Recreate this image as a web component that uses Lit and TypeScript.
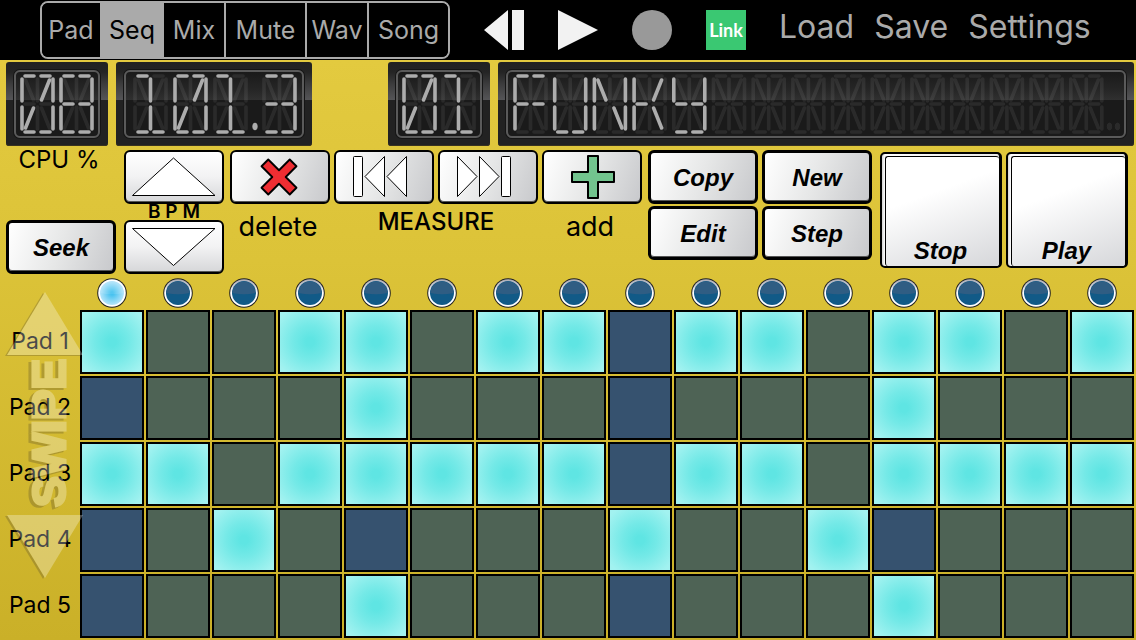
import { LitElement, html, svg, css } from "lit";
import { customElement, property, state } from "lit/decorators.js";
import { classMap } from "lit/directives/class-map.js";

/* Sixteen-segment geometry inside a 35 x 60 cell: x1, y1, x2, y2. */
const SEGMENTS: Record<string, number[]> = {
  a: [5, 2, 14, 2],
  b: [21, 2, 30, 2],
  c: [33, 5, 33, 27],
  d: [33, 33, 33, 55],
  e: [21, 58, 30, 58],
  f: [5, 58, 14, 58],
  g: [2, 33, 2, 55],
  h: [2, 5, 2, 27],
  i: [5, 30, 14, 30],
  j: [21, 30, 30, 30],
  k: [5.5, 6, 13.5, 26],
  l: [17.5, 5, 17.5, 27],
  m: [29.5, 6, 21.5, 26],
  n: [13.5, 34, 5.5, 54],
  o: [17.5, 33, 17.5, 55],
  p: [21.5, 34, 29.5, 54],
};

const LIT: Record<string, string> = {
  " ": "",
  "0": "abcdefghmn",
  "1": "aloef",
  "3": "bacdefij",
  "8": "abcdefghij",
  F: "abghij",
  U: "cdefgh",
  N: "cdghkp",
  K: "ghimp",
  Y: "hijcdef",
};

@customElement("segment-display")
class SegmentDisplay extends LitElement {
  @property() value = "";
  @property({ type: Number }) span = 102;
  @property({ type: Number }) start = 14;
  @property({ type: Number }) pitch = 39;
  @property({ type: Number }) trailing = 0;

  static styles = css`
    :host {
      display: block;
      box-sizing: border-box;
      min-width: 0;
      height: 84px;
      padding: 8px;
      border-radius: 3px;
      background: linear-gradient(#222 0, #242424 10px, #3c3c3d 22px, #555557 38px, #222 38px, #222 100%);
      box-shadow: inset 0 -1px 0 #3a3320;
    }
    .glass {
      box-sizing: border-box;
      height: 68px;
      border: 2px solid #5a5a5a;
      border-radius: 6px;
      box-shadow: 0 0 0 1px #151515;
      background: linear-gradient(#1a1a1a 0, #262626 18px, #303030 28px, #1a1a1a 28px, #1a1a1a 100%);
    }
    svg {
      display: block;
      width: 100%;
      height: 64px;
    }
    line {
      stroke-width: 3.6;
      stroke-linecap: round;
    }
    .off {
      stroke: #fff;
      fill: #fff;
      opacity: 0.07;
    }
    .on {
      stroke: #adadad;
      fill: #adadad;
    }
    ellipse {
      stroke: none;
    }
  `;

  private dot(x: number, on: boolean) {
    return svg`<ellipse class=${on ? "on" : "off"} cx=${x} cy="54.5" rx="2.2" ry="3.4"></ellipse>`;
  }

  render() {
    let x = this.start;
    const parts = [];
    for (const ch of this.value) {
      if (ch === ".") {
        parts.push(this.dot(x + 2, true));
        x += 9;
        continue;
      }
      const lit = LIT[ch] ?? "";
      const keys = Object.keys(SEGMENTS).sort((p, q) => Number(lit.includes(p)) - Number(lit.includes(q)));
      parts.push(svg`<g transform="translate(${x} 2)">${keys.map((k) => {
        const [x1, y1, x2, y2] = SEGMENTS[k];
        return svg`<line class=${lit.includes(k) ? "on" : "off"} x1=${x1} y1=${y1} x2=${x2} y2=${y2}></line>`;
      })}</g>`);
      x += this.pitch;
    }
    for (let i = 0; i < this.trailing; i++) parts.push(this.dot(x + 1 + i * 8, false));
    return html`<div class="glass">
      <svg viewBox="10 0 ${this.span - 20} 64" role="img" aria-label=${this.value.trim()}>${parts}</svg>
    </div>`;
  }
}

const TABS = [
  { name: "Pad", size: "narrow" },
  { name: "Seq", size: "mid" },
  { name: "Mix", size: "mid" },
  { name: "Mute", size: "wide" },
  { name: "Wav", size: "mid" },
  { name: "Song", size: "wide" },
];

const PATTERN = [
  "x..xx.xx.xx.xx.x",
  "....x.......x...",
  "xx.xxxxx.xx.xxxx",
  "..x.....x..x....",
  "....x.......x...",
];

const CROSS = "M-5 -21H5V-5H21V5H5V21H-5V5H-21V-5H-5Z";

@customElement("app-root")
class AppRoot extends LitElement {
  @state() tab = "Seq";
  @state() step = 0;
  @state() rows = PATTERN.map((r) => [...r].map((c) => c === "x"));

  static styles = css`
    :host {
      display: block;
      min-height: 100vh;
      box-sizing: border-box;
      overflow: hidden;
      font-family: Inter, "Liberation Sans", sans-serif;
      color: #000;
      background: linear-gradient(#e3ca3f 60px, #dcc338 260px, #cab028 100%);
    }
    button {
      margin: 0;
      padding: 0;
      font: inherit;
      color: inherit;
      cursor: pointer;
    }
    svg {
      display: block;
    }
    .topbar {
      display: flex;
      align-items: center;
      height: 60px;
      padding-left: 40px;
      background: #000;
      color: #aaa;
    }
    .tabs {
      display: flex;
      height: 54px;
      border: 2px solid #aaa;
      border-radius: 8px;
      overflow: hidden;
      font-size: 25px;
    }
    .tab {
      box-sizing: border-box;
      border: 0;
      border-left: 2px solid #aaa;
      background: #000;
    }
    .tab:first-child {
      border-left: 0;
    }
    .narrow {
      width: 58px;
    }
    .mid {
      width: 62px;
    }
    .wide {
      width: 81px;
    }
    .tab.selected {
      background: #aaa;
      color: #000;
    }
    .transport {
      display: flex;
      gap: 34px;
      margin-left: 34px;
    }
    .plain {
      width: 40px;
      height: 40px;
      border: 0;
      background: none;
    }
    .plain.link {
      background: #3ac872;
      color: #fff;
      font: bold 18px/40px Lato, sans-serif;
    }
    .menu {
      display: flex;
      gap: 20px;
      margin: 0 0 6px 33px;
    }
    .menu button {
      border: 0;
      background: none;
      font-size: 32px;
      line-height: 40px;
    }
    .displays {
      display: flex;
      gap: 8px;
      padding: 2px 2px 0 6px;
    }
    .d102 {
      flex: 102 1 102px;
    }
    .d196 {
      flex: 196 1 196px;
      margin-right: 68px;
    }
    .d636 {
      flex: 636 1 636px;
    }
    .controls {
      display: flex;
      height: 124px;
      padding: 4px 8px 0 6px;
    }
    .col {
      display: flex;
      flex-direction: column;
      align-items: stretch;
      text-align: center;
      margin-right: 6px;
    }
    .seekcol {
      flex: 110 1 0;
      justify-content: space-between;
      margin-right: 8px;
    }
    .single {
      flex: 100 1 0;
    }
    .single.tight {
      margin-right: 4px;
    }
    .double {
      flex: 204 1 0;
      margin-right: 4px;
    }
    .pair {
      display: grid;
      grid-template-columns: 1fr 1fr;
      gap: 2px 4px;
    }
    .quad {
      flex: 224 1 0;
      margin-right: 8px;
      align-content: start;
    }
    .big {
      flex: 248 1 0;
      padding-top: 2px;
      align-content: start;
    }
    .cap {
      font-size: 24px;
      line-height: 20px;
      white-space: nowrap;
    }
    .seekcol .cap {
      padding-right: 4px;
    }
    .cap.bpm {
      font-size: 19px;
      line-height: 16px;
      font-weight: 600;
      white-space: pre;
    }
    .cap.low {
      padding-right: 4px;
      font-size: 27px;
      line-height: 46px;
    }
    .cap.measure {
      line-height: 36px;
      font-weight: 500;
    }
    .key {
      box-sizing: border-box;
      height: 54px;
      border: 2px solid #000;
      border-radius: 6px;
      background: linear-gradient(110deg, #fff, #e6e7e7 50%, #c8c9cc);
      box-shadow: inset 0 -1px 0 #555;
    }
    .key.vert {
      background: linear-gradient(#fff, #f2f2f3 50%, #d6d7d9);
    }
    .key svg {
      width: 100%;
      height: 50px;
    }
    .key.word {
      border-width: 3px;
      padding-top: 2px;
      font: italic bold 24px "Liberation Sans", sans-serif;
    }
    .slab {
      box-sizing: border-box;
      height: 116px;
      border: 2px solid #000;
      border-right-width: 3px;
      border-radius: 5px;
      padding: 2px 0 0 3px;
      background: linear-gradient(90deg, #d4d4d4, #fff 3px, #e8e8e8);
      font: italic bold 24px/30px "Liberation Sans", sans-serif;
    }
    .face {
      display: flex;
      box-sizing: border-box;
      height: 110px;
      align-items: flex-end;
      justify-content: center;
      padding-right: 4px;
      border-top: 1px solid #000;
      border-left: 1px solid #000;
      border-radius: 3px;
      background: linear-gradient(160deg, #fff 35%, #d6d7da);
    }
    .art {
      fill: #fff;
      stroke: #000;
      stroke-width: 1;
    }
    .thick {
      stroke: #000;
      stroke-width: 2;
      stroke-linejoin: round;
    }
    .red {
      fill: #ee2d32;
    }
    .green {
      fill: #72c48e;
    }
    .seq {
      position: relative;
      display: grid;
      grid-template-columns: 78px repeat(16, minmax(0, 1fr));
      gap: 2px;
      padding: 4px 2px 2px 0;
    }
    .led {
      justify-self: center;
      width: 30px;
      height: 30px;
      border: 0;
      border-radius: 50%;
      background: none;
    }
    .padname {
      align-self: center;
      padding: 0 0 2px 2px;
      font-size: 23px;
      text-align: center;
      white-space: nowrap;
    }
    .cell {
      box-sizing: border-box;
      height: 64px;
      border: 2px solid #000;
      background: #4e6355;
    }
    .cell.beat {
      background: #36526f;
    }
    .cell.on {
      background: radial-gradient(circle at center, #5fe5e3 10%, #74e9e7 40%, #a2f2f0 90%);
    }
    .swipe {
      position: absolute;
      top: 18px;
      left: 4px;
      width: 80px;
      height: 288px;
      pointer-events: none;
    }
    .swipe text {
      font: bold 46px "Liberation Sans", sans-serif;
      stroke: #fff;
      stroke-width: 3;
    }
    .raised {
      fill: #fff;
      opacity: 0.29;
      filter: drop-shadow(-3px 2px 0 #54482c);
    }
    .raised.flat {
      filter: drop-shadow(-2px 1px 0 #54482c);
    }
  `;

  private toggle(r: number, c: number) {
    this.rows = this.rows.map((row, i) => (i === r ? row.map((v, j) => (j === c ? !v : v)) : row));
  }

  private led(i: number) {
    const on = i === this.step;
    return html`<button class="led" aria-label="Step ${i + 1}" @click=${() => (this.step = i)}>
      <svg viewBox="0 0 30 30" width="30" height="30">
        <defs>
          <radialGradient id="glow"><stop offset="0.1" stop-color="#3fc0ef" /><stop offset="1" stop-color="#b4e4fa" /></radialGradient>
          <linearGradient id="ring" x2="0" y2="1"><stop offset="0" stop-color="#a9a9b4" /><stop offset="0.5" stop-color="#fff" /></linearGradient>
        </defs>
        <circle cx="15" cy="15" r="14.8" fill="#222" />
        <circle cx="15" cy="15" r="13.8" fill=${on ? "#fff" : "url(#ring)"} />
        <circle cx="15" cy="15" r="12" fill=${on ? "url(#glow)" : "#115a87"} />
        <path d="M3.5 15a11.5 11.5 0 0 1 23 0Q15 17.5 3.5 15Z" fill=${on ? "#fff" : "#4d5f80"} opacity=${on ? 0.12 : 0.5} />
      </svg>
    </button>`;
  }

  render() {
    return html`
      <header class="topbar">
        <nav class="tabs">
          ${TABS.map(
            (t) => html`<button
              class=${classMap({ tab: true, [t.size]: true, selected: t.name === this.tab })}
              @click=${() => (this.tab = t.name)}
            >${t.name}</button>`
          )}
        </nav>
        <div class="transport">
          <button class="plain" aria-label="Rewind">
            <svg viewBox="0 0 40 40" fill="#f2f2f2"><path d="M24 0V40L0 20ZM28 0H40V40H28Z" /></svg>
          </button>
          <button class="plain" aria-label="Start">
            <svg viewBox="0 0 40 40" fill="#f2f2f2"><path d="M0 0L40 20L0 40Z" /></svg>
          </button>
          <button class="plain" aria-label="Record">
            <svg viewBox="0 0 40 40" fill="#999"><circle cx="20" cy="20" r="20" /></svg>
          </button>
          <button class="plain link">Link</button>
        </div>
        <div class="menu">
          <button>Load</button>
          <button>Save</button>
          <button>Settings</button>
        </div>
      </header>

      <section class="displays">
        <segment-display class="d102" value="08" .span=${102} .start=${14}></segment-display>
        <segment-display class="d196" value="101.3" .span=${196} .start=${17} .pitch=${40}></segment-display>
        <segment-display class="d102" value="01" .span=${102} .start=${14}></segment-display>
        <segment-display class="d636" value=${"FUNKY".padEnd(15)} .span=${636} .start=${15} .pitch=${39.7} .trailing=${2}></segment-display>
      </section>

      <section class="controls">
        <div class="col seekcol">
          <span class="cap">CPU %</span>
          <button class="key word">Seek</button>
        </div>
        <div class="col single">
          <button class="key vert" aria-label="BPM up">
            <svg class="art" viewBox="0 0 96 50"><path d="M6.5 43.5L47.5 6L89 43.5Z" /></svg>
          </button>
          <span class="cap bpm">B P M</span>
          <button class="key vert" aria-label="BPM down">
            <svg class="art" viewBox="0 0 96 50"><path d="M6.5 6.5L47.5 43.5L89 6.5Z" /></svg>
          </button>
        </div>
        <div class="col single tight">
          <button class="key" id="delete" aria-label="delete">
            <svg viewBox="0 0 96 50"><path class="thick red" transform="translate(47 25) rotate(45) scale(.95)" d=${CROSS} /></svg>
          </button>
          <label class="cap low" for="delete">delete</label>
        </div>
        <div class="col double">
          <div class="pair">
            <button class="key" aria-label="Previous measure">
              <svg class="art" viewBox="0 0 96 50">
                <rect x="17.5" y="4.5" width="9" height="40" rx="1" />
                <path d="M48.5 4.5V44.5L29 24.5ZM70.5 4.5V44.5L51 24.5Z" />
              </svg>
            </button>
            <button class="key" aria-label="Next measure">
              <svg class="art" viewBox="0 0 96 50">
                <path d="M17.5 4.5V44.5L37 24.5ZM39.5 4.5V44.5L59 24.5Z" />
                <rect x="61.5" y="4.5" width="9" height="40" rx="1" />
              </svg>
            </button>
          </div>
          <span class="cap measure">MEASURE</span>
        </div>
        <div class="col single">
          <button class="key" id="add" aria-label="add">
            <svg viewBox="0 0 96 50"><path class="thick green" transform="translate(49 25)" d=${CROSS} /></svg>
          </button>
          <label class="cap low" for="add">add</label>
        </div>
        <div class="pair quad">
          <button class="key word">Copy</button>
          <button class="key word">New</button>
          <button class="key word">Edit</button>
          <button class="key word">Step</button>
        </div>
        <div class="pair big">
          <button class="slab"><span class="face">Stop</span></button>
          <button class="slab"><span class="face">Play</span></button>
        </div>
      </section>

      <section class="seq">
        <span></span>
        ${this.rows[0].map((_, i) => this.led(i))}
        ${this.rows.map(
          (row, r) => html`
            <span class="padname">Pad ${r + 1}</span>
            ${row.map(
              (on, c) => html`<button
                class=${classMap({ cell: true, on, beat: !on && c % 4 === 0 })}
                aria-label="Pad ${r + 1} step ${c + 1}"
                aria-pressed=${on}
                @click=${() => this.toggle(r, c)}
              ></button>`
            )}
          `
        )}
        <svg class="swipe" viewBox="0 0 80 288">
          <g class="raised flat">
            <path d="M3 63L41 0L79 63Z" />
            <path d="M3 223H79L41 286Z" />
          </g>
          <g class="raised">
            <text transform="translate(61 215) rotate(-90)">SWIPE</text>
          </g>
        </svg>
      </section>
    `;
  }
}
